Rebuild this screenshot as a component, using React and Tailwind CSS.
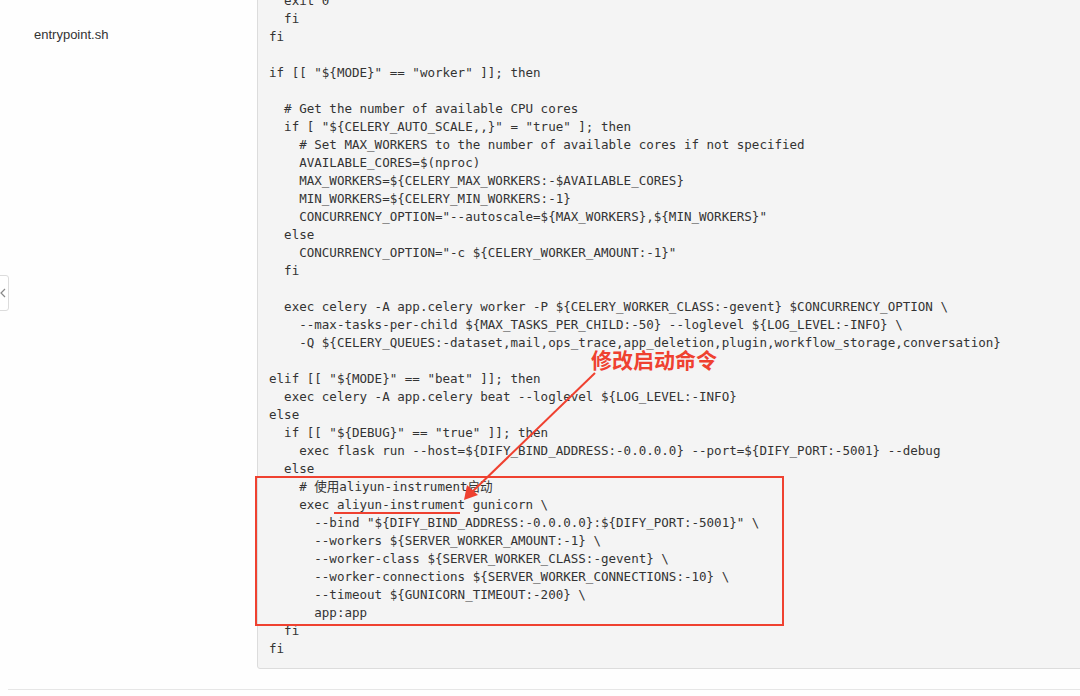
const CODE = [
  '  exit 0',
  '  fi',
  'fi',
  '',
  'if [[ "${MODE}" == "worker" ]]; then',
  '',
  '  # Get the number of available CPU cores',
  '  if [ "${CELERY_AUTO_SCALE,,}" = "true" ]; then',
  '    # Set MAX_WORKERS to the number of available cores if not specified',
  '    AVAILABLE_CORES=$(nproc)',
  '    MAX_WORKERS=${CELERY_MAX_WORKERS:-$AVAILABLE_CORES}',
  '    MIN_WORKERS=${CELERY_MIN_WORKERS:-1}',
  '    CONCURRENCY_OPTION="--autoscale=${MAX_WORKERS},${MIN_WORKERS}"',
  '  else',
  '    CONCURRENCY_OPTION="-c ${CELERY_WORKER_AMOUNT:-1}"',
  '  fi',
  '',
  '  exec celery -A app.celery worker -P ${CELERY_WORKER_CLASS:-gevent} $CONCURRENCY_OPTION \\',
  '    --max-tasks-per-child ${MAX_TASKS_PER_CHILD:-50} --loglevel ${LOG_LEVEL:-INFO} \\',
  '    -Q ${CELERY_QUEUES:-dataset,mail,ops_trace,app_deletion,plugin,workflow_storage,conversation}',
  '',
  'elif [[ "${MODE}" == "beat" ]]; then',
  '  exec celery -A app.celery beat --loglevel ${LOG_LEVEL:-INFO}',
  'else',
  '  if [[ "${DEBUG}" == "true" ]]; then',
  '    exec flask run --host=${DIFY_BIND_ADDRESS:-0.0.0.0} --port=${DIFY_PORT:-5001} --debug',
  '  else',
  '    # 使用aliyun-instrument启动',
  '    exec aliyun-instrument gunicorn \\',
  '      --bind "${DIFY_BIND_ADDRESS:-0.0.0.0}:${DIFY_PORT:-5001}" \\',
  '      --workers ${SERVER_WORKER_AMOUNT:-1} \\',
  '      --worker-class ${SERVER_WORKER_CLASS:-gevent} \\',
  '      --worker-connections ${SERVER_WORKER_CONNECTIONS:-10} \\',
  '      --timeout ${GUNICORN_TIMEOUT:-200} \\',
  '      app:app',
  '  fi',
  'fi',
];

export default function App() {
  return (
    <div className="relative w-[1080px] h-[696px] overflow-hidden bg-[#fefefe] font-['Liberation_Sans',sans-serif]">
      <div className="flex">
        {/* sidebar */}
        <div className="w-[257px] shrink-0 pl-[34px] pt-[27px]">
          <p className="text-[13px] leading-[16px] text-[#333]">entrypoint.sh</p>
        </div>

        {/* code block, scrolled so its top is above the window */}
        <div className="-mt-[20px] w-[900px] shrink-0 rounded-[3px] border border-[#dcdcdc] bg-[#f4f4f4] pl-[11px] pt-[11px] pb-[10px]">
          <pre className="font-['DejaVu_Sans_Mono','Noto_Sans_CJK_SC',monospace] text-[12.54px] leading-[18px] text-[#333]">
            {CODE.map((line, i) => (
              <div key={i} className="h-[18px] whitespace-pre">
                {line || " "}
              </div>
            ))}
          </pre>
        </div>
      </div>

      {/* bottom divider */}
      <div className="ml-[8px] mt-[20px] h-px bg-[#e6e6e6]" />

      {/* collapse tab at the left edge */}
      <div className="absolute left-[-14px] top-[275px] flex h-[36px] w-[23px] items-center justify-end rounded-[3px] border border-[#dcdcdc] bg-white pr-[1px]">
        <svg width="8" height="10" viewBox="0 0 8 10" fill="none" stroke="#888" strokeWidth="1.2">
          <path d="M6 1 L2 5 L6 9" />
        </svg>
      </div>

      {/* annotation: red box */}
      <div className="absolute left-[255px] top-[476px] h-[150px] w-[529px] border-2 border-[#ef4130]" />

      {/* annotation: label */}
      <div className="absolute left-[591px] top-[345px] font-['Noto_Sans_CJK_SC',sans-serif] text-[21px] font-bold leading-[28px] text-[#ef4130]">
        修改启动命令
      </div>

      {/* annotation: arrow + underline */}
      <svg className="absolute left-0 top-0" width="1080" height="696" viewBox="0 0 1080 696">
        <line x1="595" y1="373" x2="472" y2="492" stroke="#ef4130" strokeWidth="2" />
        <polygon points="464,500 467,485 478,495" fill="#ef4130" />
        <line x1="334" y1="513" x2="460" y2="513" stroke="#ef4130" strokeWidth="2" />
      </svg>
    </div>
  );
}
